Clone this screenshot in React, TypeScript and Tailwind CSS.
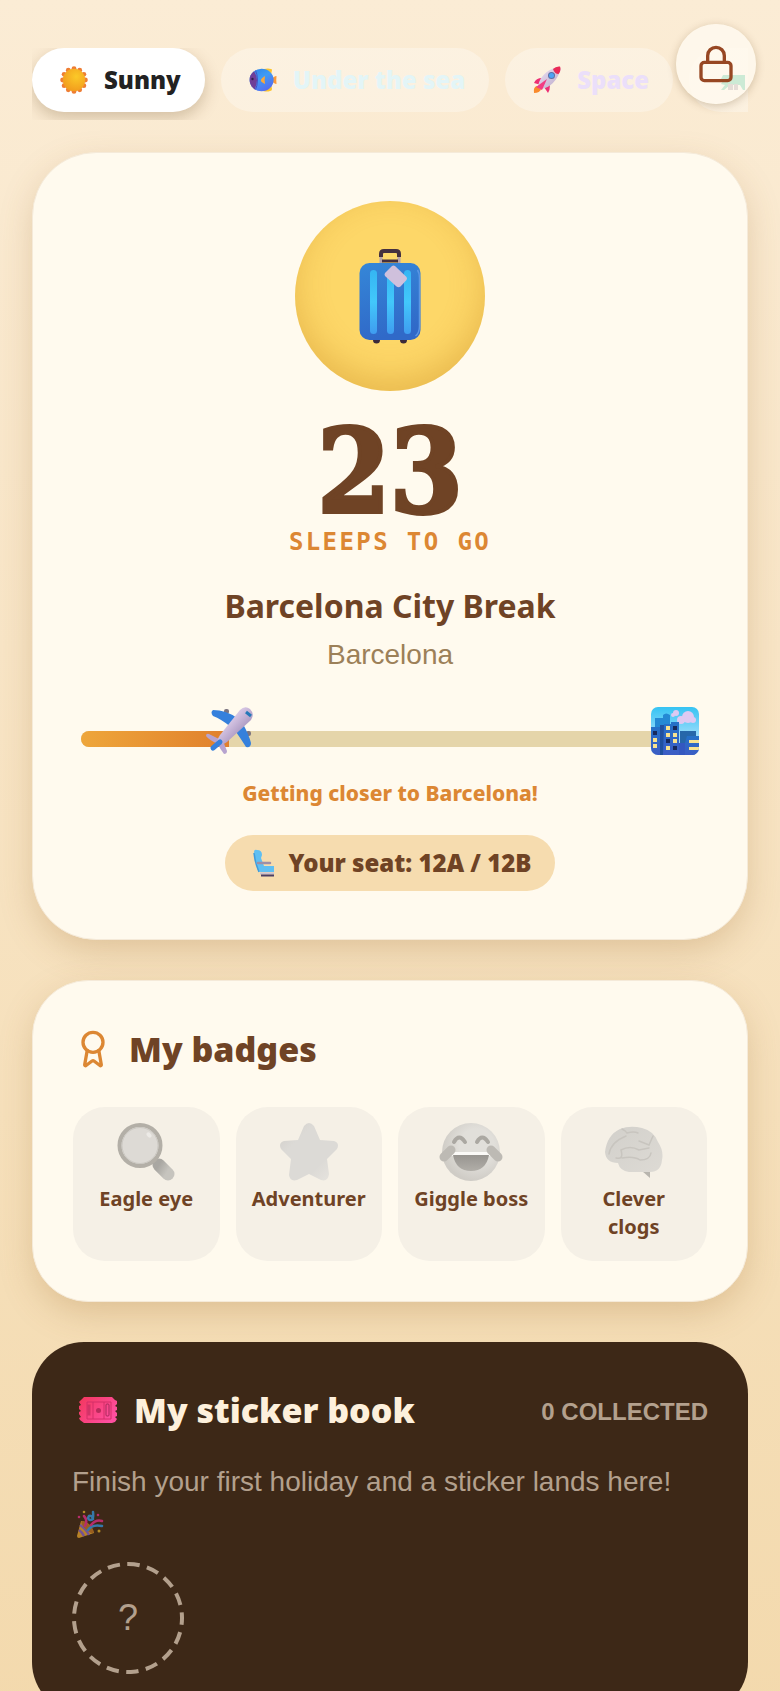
import type { ReactNode } from 'react';
import { Award, Lock } from 'lucide-react';

type Theme = {
  name: string;
  color: string;
  icon: ReactNode;
};

type Badge = {
  name: string;
  icon: ReactNode;
};

const rounded = "font-[family-name:'Noto_Sans','Open_Sans',sans-serif]";

function SunIcon() {
  const petals = Array.from({ length: 12 }, (_, i) => (i * Math.PI) / 6);
  return (
    <svg viewBox="0 0 28 28" className="size-7 shrink-0" aria-hidden="true">
      <defs>
        <radialGradient id="sun" cx="0.6" cy="0.35" r="0.7">
          <stop offset="0" stopColor="#fbc928" />
          <stop offset="1" stopColor="#f29a1c" />
        </radialGradient>
      </defs>
      {petals.map((a) => (
        <circle key={a} cx={14 + 11.4 * Math.sin(a)} cy={14 - 11.4 * Math.cos(a)} r="2.4" fill="#ee7d34" />
      ))}
      <circle cx="14" cy="14" r="11.2" fill="url(#sun)" />
    </svg>
  );
}

function FishIcon() {
  return (
    <svg viewBox="0 0 28 28" className="size-7 shrink-0" aria-hidden="true">
      <defs>
        <linearGradient id="fish" x1="0" y1="0" x2="0.6" y2="1">
          <stop offset="0" stopColor="#2a7be0" />
          <stop offset="0.5" stopColor="#3f9cf5" />
          <stop offset="1" stopColor="#5a63f0" />
        </linearGradient>
        <clipPath id="fishBody">
          <ellipse cx="12.6" cy="14" rx="12" ry="11.2" />
        </clipPath>
      </defs>
      <path d="M15 3q4-1 7 0 1 0 1 1l-1 5q1 5 0 9l1 5q0 2-2 2-3 1-7 0z" fill="#fcc42c" />
      <path d="M22 14q3-4 5.500-4-.5 4 0 8-2.500 0-5.500-4z" fill="#fb9a3a" />
      <g clipPath="url(#fishBody)">
        <rect width="28" height="28" fill="url(#fish)" />
        <path d="M0 4h4q8 10 0 22H0z" fill="#6f3f98" />
        <path d="M6 3q5 11 0 22" stroke="#4b4fc0" strokeWidth="1" fill="none" />
      </g>
      <path d="M16 10q-5 3-4 5 0 1 4 3-.8-4 0-8z" fill="#fba83a" />
      <circle cx="3.500" cy="13" r="1.200" fill="#33204d" />
    </svg>
  );
}

function RocketIcon() {
  return (
    <svg viewBox="0 0 28 28" className="size-7 shrink-0" aria-hidden="true">
      <defs>
        <linearGradient id="hull" x1="0" y1="0" x2="1" y2="1">
          <stop offset="0" stopColor="#eee3f5" />
          <stop offset="1" stopColor="#b9a8c8" />
        </linearGradient>
      </defs>
      <path d="M1 27q-1-6 3-7l4 3q-1 4-7 4z" fill="#f98a2c" />
      <path d="M9 12q-6 0-8 5l7 2zM17 19q0 5-2 8l-4-6z" fill="#ec2f74" />
      <path d="M5 20Q8 6 24 1q4 0 3.500 3Q22 20 9 23q-4 0-4-3z" fill="url(#hull)" />
      <path d="M20 3q3-3 7-2.500 1.500 4-1.500 7.500-4 0-5.500-5z" fill="#ea2a56" />
      <path d="M3 21l11-8-5 11z" fill="#f23d83" />
      <circle cx="18.500" cy="9.500" r="3.500" fill="#5b6fa5" />
      <circle cx="18.500" cy="9.500" r="2.500" fill="#4da3f5" />
    </svg>
  );
}

function TreeIcon() {
  return (
    <svg viewBox="0 0 28 28" className="size-7 shrink-0" aria-hidden="true">
      <path d="M6 9h22v15h-2l-3-5H13l-6 5H4l4-5-4-1 2-3-2-2z" fill="#02a86a" />
      <path d="M11 18h5v6h-5zM17 18h4v6h-4z" fill="#7d6b73" />
    </svg>
  );
}

function SuitcaseIcon() {
  return (
    <svg viewBox="0 0 62 96" className="h-24 w-[62px]" aria-hidden="true">
      <defs>
        <linearGradient id="case" x1="0" y1="0" x2="0.2" y2="1">
          <stop offset="0" stopColor="#3587d8" />
          <stop offset="1" stopColor="#3069c8" />
        </linearGradient>
        <linearGradient id="rib" x1="0" y1="0" x2="0" y2="1">
          <stop offset="0" stopColor="#35b5f2" />
          <stop offset="0.5" stopColor="#42c8fb" />
          <stop offset="1" stopColor="#3f9cf0" />
        </linearGradient>
      </defs>
      <path d="M22 16V7M40 16V7" stroke="#b7a4a8" strokeWidth="3" />
      <path d="M22 9V6q0-3 3-3h12q3 0 3 3v3" fill="none" stroke="#44303f" strokeWidth="4" />
      <path d="M23 13h16" stroke="#44303f" strokeWidth="3" />
      <circle cx="17.500" cy="92" r="3.500" fill="#3b2a3a" />
      <circle cx="44.500" cy="92" r="3.500" fill="#3b2a3a" />
      <rect x="0.500" y="15" width="61" height="77" rx="10" fill="url(#case)" />
      <path d="M58.500 22q2 3 2 8v48q0 7-4 10" stroke="#5b96e3" strokeWidth="1.500" fill="none" />
      <rect x="11" y="22" width="7" height="64" rx="3.500" fill="url(#rib)" />
      <rect x="28" y="22" width="7" height="64" rx="3.500" fill="url(#rib)" />
      <rect x="45" y="22" width="7" height="64" rx="3.500" fill="url(#rib)" />
      <path d="M26 25l7-7q1.500-1 3 0l11.500 11q1 1.500 0 3l-6 6.500q-2 1.500-4 0L26 28q-1-1.500 0-3z" fill="#cfc0dc" />
    </svg>
  );
}

function PlaneIcon() {
  return (
    <svg viewBox="0 0 48 48" className="size-12" aria-hidden="true">
      <defs>
        <linearGradient id="fuselage" x1="0.2" y1="0.2" x2="0.8" y2="0.8">
          <stop offset="0.3" stopColor="#d6c5e3" />
          <stop offset="0.7" stopColor="#b3a1c8" />
        </linearGradient>
      </defs>
      <rect x="19" y="2" width="5" height="5" rx="2" fill="#7c7480" />
      <rect x="41" y="24" width="5" height="5" rx="2" fill="#7c7480" />
      <path d="M8 3q13 0 24 8l-6 9Q16 12 8 9 5 5 8 3zM29 22l9-5q6 11 8 19 0 5-5 4-5-8-12-18z" fill="#3580dc" />
      <path d="M1 29q0-3 3-2l14 7 4 10q0 3-3 3-4-5-6-10Q4 33 1 29z" fill="#b7a3cf" />
      <path d="M12 36q0-4 3-8L35 3q5-5 10-1 5 5 1 11L22 35q-5 4-10 1z" fill="url(#fuselage)" />
      <path d="M41 5l5 4" stroke="#2478b8" strokeWidth="3" />
      <path d="M15 35l-7 6" stroke="#3580dc" strokeWidth="5" strokeLinecap="round" />
    </svg>
  );
}

function CityIcon() {
  return (
    <svg viewBox="0 0 48 48" className="size-12" aria-hidden="true">
      <defs>
        <linearGradient id="sky" x1="0" y1="0" x2="0" y2="1">
          <stop offset="0" stopColor="#35c3f3" />
          <stop offset="0.6" stopColor="#9bdcfb" />
        </linearGradient>
        <linearGradient id="tower" x1="0" y1="0" x2="0" y2="1">
          <stop offset="0" stopColor="#2471c8" />
          <stop offset="1" stopColor="#3c5cc4" />
        </linearGradient>
        <clipPath id="cityClip">
          <rect width="48" height="48" rx="7" />
        </clipPath>
      </defs>
      <g clipPath="url(#cityClip)">
        <rect width="48" height="48" fill="url(#sky)" />
        <g fill="#ddc9f2">
          <circle cx="37" cy="10" r="6" />
          <circle cx="30" cy="13" r="4" />
          <circle cx="42" cy="13" r="3" />
          <circle cx="25" cy="6" r="3" />
          <circle cx="22" cy="8" r="2" />
        </g>
        <path d="M4 11h8V8q3-3 7 0v12H4z" fill="#2489d4" />
        <path d="M0 20h9v28H0z" fill="url(#tower)" />
        <path d="M9 18h6v30H9z" fill="#20509f" />
        <path d="M29 24h16v24H29z" fill="#2667aa" />
        <path d="M13 17h7v-2h8v33H12z" fill="url(#tower)" />
        <path d="M28 36h6v12h-6z" fill="#3458c0" />
        <path d="M36 29h12v19H34V36z" fill="url(#tower)" />
        <path d="M2 31h4v4H2zM2 37h4v4H2zM15 19h4v4h-4zM15 26h4v4h-4zM15 39h4v4h-4zM22 26h4v4h-4zM22 32h4v4h-4zM38 33h10v3H38zM38 40h10v3H38z" fill="#f8e391" />
        <path d="M2 24h4v4H2zM22 19h4v4h-4zM15 32h4v4h-4zM22 39h4v4h-4z" fill="#16295c" />
      </g>
    </svg>
  );
}

function SeatIcon() {
  return (
    <svg viewBox="0 0 28 28" className="size-7 shrink-0" aria-hidden="true">
      <path d="M5 3q0-3 3-2 5 0 5 5l-1 3 3 8h10v6H12q-3 0-4-4z" fill="#5fbff2" />
      <path d="M5 4q1 10 5 19" stroke="#3f9cdc" strokeWidth="1.500" fill="none" />
      <path d="M9 14h12" stroke="#9d8fa8" strokeWidth="2.500" strokeLinecap="round" />
      <path d="M11 23.500h14v2H11z" fill="#cbbfd0" />
      <path d="M12 25.500h13v2H12z" fill="#4c3f63" />
    </svg>
  );
}

function MagnifierIcon() {
  return (
    <svg viewBox="0 0 58 58" className="size-[58px]" aria-hidden="true">
      <defs>
        <linearGradient id="grip" x1="0" y1="0" x2="1" y2="0.6">
          <stop offset="0" stopColor="#a9a7a2" />
          <stop offset="1" stopColor="#c6c4be" />
        </linearGradient>
      </defs>
      <path d="M42 42l9 9" stroke="url(#grip)" strokeWidth="13" strokeLinecap="round" />
      <circle cx="23" cy="22.500" r="20.500" fill="#dddad5" stroke="#b3afa7" strokeWidth="4" />
      <circle cx="23" cy="22.500" r="18" fill="none" stroke="#cbc8c2" strokeWidth="1" />
      <ellipse cx="32" cy="12" rx="2" ry="3" transform="rotate(-40 32 12)" fill="#eceae6" />
    </svg>
  );
}

function StarIcon() {
  return (
    <svg viewBox="0 0 58 58" className="size-[58px]" aria-hidden="true">
      <defs>
        <linearGradient id="star" x1="0" y1="0" x2="1" y2="1">
          <stop offset="0" stopColor="#cfccc6" />
          <stop offset="0.3" stopColor="#dcdad6" />
          <stop offset="0.7" stopColor="#dcdad6" />
          <stop offset="1" stopColor="#e9e6e0" />
        </linearGradient>
      </defs>
      <path
        d="M24 3q5-6 10 0l6 14 14 1q6 2 3 8L47 36l2 15q-1 8-8 6l-12-6-12 6q-7 2-8-5l2-16L1 26q-3-6 3-8l14-1z"
        fill="url(#star)"
      />
    </svg>
  );
}

function LaughIcon() {
  return (
    <svg viewBox="0 0 64 58" className="h-[58px] w-16" aria-hidden="true">
      <defs>
        <radialGradient id="face" cx="0.6" cy="0.4" r="0.6">
          <stop offset="0.5" stopColor="#e1dfda" />
          <stop offset="1" stopColor="#cfccc6" />
        </radialGradient>
        <linearGradient id="mouth" x1="0" y1="0" x2="0" y2="1">
          <stop offset="0" stopColor="#989590" />
          <stop offset="1" stopColor="#b1aea8" />
        </linearGradient>
      </defs>
      <circle cx="32" cy="29" r="29" fill="url(#face)" />
      <path d="M15 19q5-9 11 0M38 19q5-9 11 0" fill="none" stroke="#aba8a2" strokeWidth="4" strokeLinecap="round" />
      <path d="M12 29h40v4H12z" fill="#fbfaf7" />
      <path d="M14 32h36q-3 16-18 16T14 32z" fill="url(#mouth)" />
      <path d="M12 27l-7 7M52 27l7 7" stroke="#bdbab4" strokeWidth="9" strokeLinecap="round" />
    </svg>
  );
}

function BrainIcon() {
  return (
    <svg viewBox="0 0 58 58" className="size-[58px]" aria-hidden="true">
      <defs>
        <linearGradient id="brain" x1="0" y1="0" x2="1" y2="1">
          <stop offset="0" stopColor="#d2d0cb" />
          <stop offset="1" stopColor="#dddad4" />
        </linearGradient>
      </defs>
      <path d="M37 48l8 7v-8z" fill="#b8b5ae" />
      <path d="M0 29Q2 12 15 6q10-4 22-1 12 3 16 14 6 9 4 18-1 12-12 12H24q-9-1-11-9Q1 40 0 29z" fill="url(#brain)" />
      <path
        d="M4 31q2-12 17-18M17 6q4 2 5 4 7-2 11 0M34 18l10 4 4-9M11 35q8 2 5-8 9-5 18 0l10-2M17 35q12-2 18 2 10 0 11-7"
        fill="none"
        stroke="#c8c5bf"
        strokeWidth="1.500"
        strokeLinecap="round"
      />
    </svg>
  );
}

function TicketIcon() {
  return (
    <svg viewBox="0 0 40 28" className="ml-1.5 h-7 w-10 shrink-0" aria-hidden="true">
      <defs>
        <linearGradient id="ticket" x1="0" y1="0" x2="1" y2="0.6">
          <stop offset="0" stopColor="#f2365c" />
          <stop offset="1" stopColor="#ff4fa0" />
        </linearGradient>
      </defs>
      <path
        d="M6 1h28l3 3 2 1v3l-2 2 2 1v3l-2 1 2 2v3l-2 1 2 2-2 3-3 1H6l-4-3-1-2 2-1-2-3v-2l2-1-2-2v-3l2-1-2-3 2-2z"
        fill="url(#ticket)"
      />
      <g fill="none" stroke="#d42f68" strokeWidth="1">
        <path d="M9 6h24v17H9zM15 6v17M26 6v17" />
        <rect x="28" y="8" width="3" height="12" rx="1" stroke="#a8295a" />
      </g>
      <path d="M9.500 8.500h3v11h-3z" fill="#b82c5c" fillOpacity="0.600" />
      <circle cx="20.500" cy="14.500" r="2.500" fill="#b82c5c" />
    </svg>
  );
}

function PartyIcon() {
  return (
    <svg viewBox="0 0 28 28" className="mx-1 inline-block size-7 align-middle opacity-70" aria-label="Party popper" role="img">
      <path d="M5 11q10 1 13 12L3 28q-2 0-2-2z" fill="#eda92f" />
      <path d="M4 15q6 4 9 10M3 20q3 2 5 6" stroke="#8c65c8" strokeWidth="2.500" fill="none" />
      <ellipse cx="11.500" cy="17" rx="3" ry="8" transform="rotate(-45 11.500 17)" fill="#c07622" />
      <path d="M8 6q4 4 1 10" stroke="#e92f8e" strokeWidth="2.500" fill="none" strokeLinecap="round" />
      <path d="M17 2q1 9-3 8-3-1-1-4 3-1 4 3M12 20q4-6 14-4" stroke="#329ae8" strokeWidth="2.500" fill="none" strokeLinecap="round" />
      <path d="M15 15q5-6 11-4" stroke="#e92f8e" strokeWidth="2.500" fill="none" strokeLinecap="round" />
      <circle cx="8" cy="2" r="1.300" fill="#e6b52c" />
      <circle cx="3" cy="7" r="1.300" fill="#e92f8e" />
      <circle cx="22" cy="5" r="1.300" fill="#e92f8e" />
      <circle cx="23" cy="21" r="1.500" fill="#e6b52c" />
    </svg>
  );
}

const themes: Theme[] = [
  { name: 'Sunny', color: 'bg-white text-[#222222] shadow-[0_6px_16px_rgba(90,60,20,0.25)]', icon: <SunIcon /> },
  { name: 'Under the sea', color: 'bg-white/30 text-[#e3f5f7]', icon: <FishIcon /> },
  { name: 'Space', color: 'bg-white/30 text-[#ebdffa]', icon: <RocketIcon /> },
  { name: 'Jungle', color: 'bg-white/30 text-[#dff5e3]', icon: <TreeIcon /> },
];

const badges: Badge[] = [
  { name: 'Eagle eye', icon: <MagnifierIcon /> },
  { name: 'Adventurer', icon: <StarIcon /> },
  { name: 'Giggle boss', icon: <LaughIcon /> },
  { name: 'Clever clogs', icon: <BrainIcon /> },
];

const daysLeft = 23;
const progress = 24;

const cardStyle = 'border border-[#f5ead9] bg-[#fffaee] shadow-[0_12px_36px_-4px_rgba(150,100,40,0.28)]';

export default function App() {
  return (
    <div className="min-h-screen bg-linear-to-b from-[#fbecd5] to-[#f3d9ac] font-[family-name:'Liberation_Sans',Arial,sans-serif] text-[#6f4325]">
      <button
        aria-label="Parent area"
        className="fixed top-6 right-6 z-10 flex size-20 items-center justify-center rounded-full bg-[#fffaf0]/80 text-[#974723] shadow-[0_2px_8px_rgba(90,60,20,0.25)]"
      >
        <Lock size={40} strokeWidth={2} />
      </button>

      <main className="flex flex-col px-8 pt-12 pb-10">
        <nav className="flex gap-4 overflow-hidden pb-2" aria-label="Themes">
          {themes.map((theme) => (
            <button
              key={theme.name}
              className={`flex h-16 shrink-0 items-center gap-4 rounded-full pr-6 pl-7 text-2xl font-black ${rounded} ${theme.color}`}
            >
              {theme.icon}
              {theme.name}
            </button>
          ))}
        </nav>

        {/* Countdown */}
        <section className={`mt-8 flex flex-col items-center rounded-[64px] p-12 ${cardStyle}`}>
          <div className="flex size-[190px] items-center justify-center rounded-full bg-[#fdd768] shadow-[inset_0_-12px_32px_rgba(190,120,20,0.3)]">
            <SuitcaseIcon />
          </div>
          <p className="mt-7 font-[family-name:'DejaVu_Serif_Condensed','DejaVu_Serif',serif] text-[116px] leading-[104px] font-bold [-webkit-text-stroke:4px_#6f4325]">
            {daysLeft}
          </p>
          <p className="mt-1 font-[family-name:'DejaVu_Sans_Mono',monospace] text-2xl leading-[30px] font-bold tracking-widest text-[#dc8733]">
            SLEEPS TO GO
          </p>
          <h1 className={`mt-6 text-[32px] leading-[50px] font-bold ${rounded}`}>Barcelona City Break</h1>
          <p className="mt-1 text-[28px] leading-10 text-[#9c8058]">Barcelona</p>

          <div className="relative mt-8 flex h-12 w-full items-end pb-2">
            <div className="h-4 w-full overflow-hidden rounded-full bg-[#e5d5aa]">
              <div className="h-full bg-linear-to-r from-[#eea63b] to-[#e07f2c]" style={{ width: `${progress}%` }} />
            </div>
            <div className="absolute top-0 -translate-x-1/2" style={{ left: `${progress}%` }}>
              <PlaneIcon />
            </div>
            <div className="absolute top-0 right-0">
              <CityIcon />
            </div>
          </div>

          <p className={`mt-5 text-[21px] leading-9 font-extrabold text-[#dc8733] ${rounded}`}>Getting closer to Barcelona!</p>
          <div className={`mt-6 flex h-14 items-center gap-3 rounded-full bg-[#f6dcaf] px-6 text-2xl font-black ${rounded}`}>
            <SeatIcon />
            Your seat: 12A / 12B
          </div>
        </section>

        {/* Badges */}
        <section className={`mt-10 rounded-[56px] p-10 ${cardStyle}`}>
          <h2 className={`flex items-center gap-4 text-[34px] leading-[56px] font-black ${rounded}`}>
            <Award size={40} className="text-[#dc8733]" />
            My badges
          </h2>
          <ul className="mt-[30px] grid grid-cols-4 gap-4">
            {badges.map((badge) => (
              <li key={badge.name} className="flex flex-col items-center rounded-[32px] bg-[#f5f0e6] p-4">
                {badge.icon}
                <span className={`mt-1 min-h-[60px] text-center text-xl leading-7 font-bold ${rounded}`}>{badge.name}</span>
              </li>
            ))}
          </ul>
        </section>

        {/* Sticker book */}
        <section className="mt-10 rounded-[52px] bg-[#3d2817] p-10">
          <div className="flex items-center justify-between">
            <h2 className={`flex items-center gap-4 text-[34px] leading-[56px] font-black text-[#fdf0dc] ${rounded}`}>
              <TicketIcon />
              My sticker book
            </h2>
            <span className="pt-1 text-2xl font-bold text-[#b3a08d]">0 COLLECTED</span>
          </div>
          <p className="mt-6 text-[28px] leading-10 text-[#b3a08d]">
            Finish your first holiday and a sticker lands here! <PartyIcon />
          </p>
          <div className="relative mt-5 flex size-28 items-center justify-center text-4xl text-[#b3a08d]">
            <svg viewBox="0 0 112 112" className="absolute inset-0 size-28" aria-hidden="true">
              <circle
                cx="56"
                cy="56"
                r="54"
                fill="none"
                stroke="currentColor"
                strokeWidth="4"
                pathLength="340"
                strokeDasharray="12.5 7.5"
                transform="rotate(-6 56 56)"
              />
            </svg>
            ?
          </div>
        </section>
      </main>
    </div>
  );
}
